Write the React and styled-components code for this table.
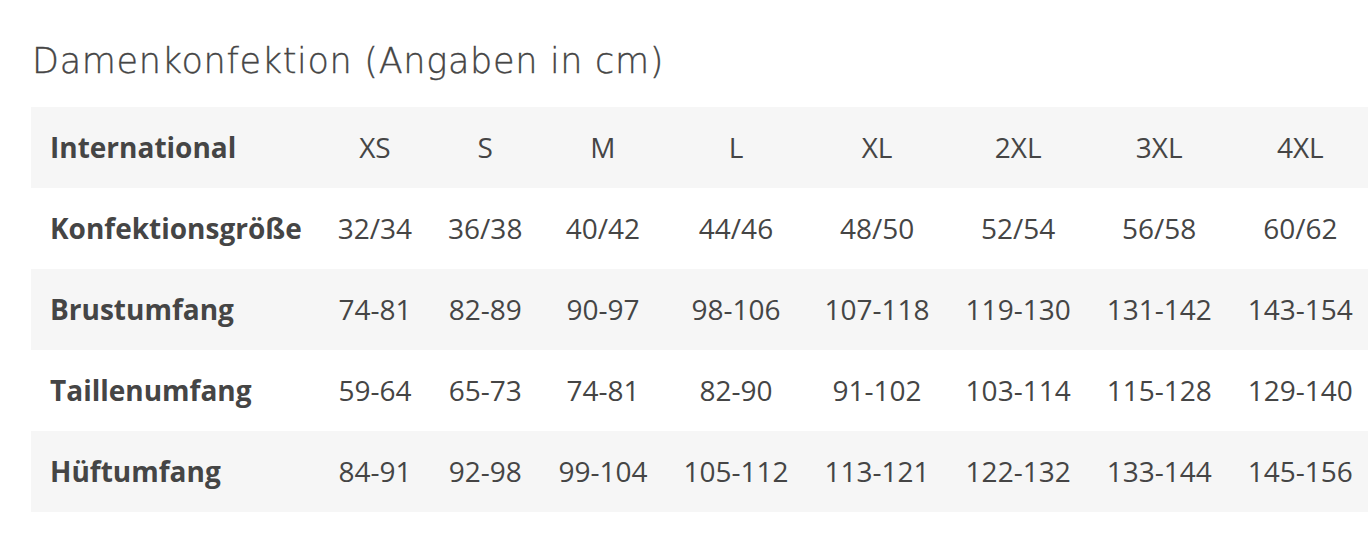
import React from 'react';
import styled, { createGlobalStyle } from 'styled-components';

const GlobalStyle = createGlobalStyle`
  html, body {
    margin: 0;
    padding: 0;
    background: #ffffff;
    overflow: hidden;
  }
`;

const Page = styled.div`
  padding: 38px 0 0 31px;
  width: 1400px;
`;

const Title = styled.h2`
  margin: 0 0 22px 1px;
  font-family: 'DejaVu Sans', 'Liberation Sans', sans-serif;
  font-weight: 200;
  font-size: 35px;
  line-height: 47px;
  letter-spacing: 0.7px;
  -webkit-text-stroke: 0.35px #454545;
  color: #454545;
`;

const Table = styled.table`
  border-collapse: collapse;
  font-family: 'Open Sans', 'Liberation Sans', sans-serif;
  font-size: 28px;
  color: #454545;
`;

const Row = styled.tr`
  background: ${p => (p.striped ? '#f6f6f6' : '#ffffff')};
`;

const Label = styled.th`
  text-align: left;
  font-weight: 700;
  height: 81px;
  box-sizing: border-box;
  padding: 0 18px 2px 19px;
  white-space: nowrap;
`;

const Cell = styled.td`
  text-align: center;
  font-weight: 400;
  height: 81px;
  box-sizing: border-box;
  padding: 0 18px 2px;
  white-space: nowrap;
`;

const rows = [
  ['International', 'XS', 'S', 'M', 'L', 'XL', '2XL', '3XL', '4XL'],
  ['Konfektionsgröße', '32/34', '36/38', '40/42', '44/46', '48/50', '52/54', '56/58', '60/62'],
  ['Brustumfang', '74-81', '82-89', '90-97', '98-106', '107-118', '119-130', '131-142', '143-154'],
  ['Taillenumfang', '59-64', '65-73', '74-81', '82-90', '91-102', '103-114', '115-128', '129-140'],
  ['Hüftumfang', '84-91', '92-98', '99-104', '105-112', '113-121', '122-132', '133-144', '145-156'],
];

export default function App() {
  return (
    <>
      <GlobalStyle />
      <Page>
        <Title>Damenkonfektion (Angaben in cm)</Title>
        <Table>
          <tbody>
            {rows.map((r, i) => (
              <Row key={r[0]} striped={i % 2 === 0}>
                <Label>{r[0]}</Label>
                {r.slice(1).map((v, j) => (
                  <Cell key={j}>{v}</Cell>
                ))}
              </Row>
            ))}
          </tbody>
        </Table>
      </Page>
    </>
  );
}
